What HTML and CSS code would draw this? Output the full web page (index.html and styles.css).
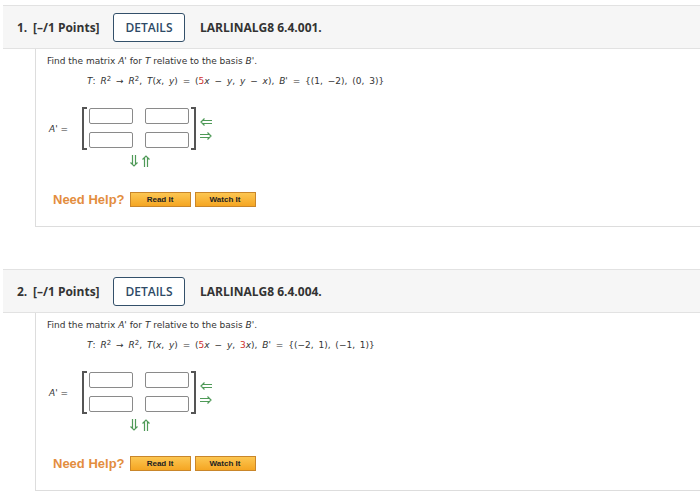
FILE: index.html
```html
<!DOCTYPE html>
<html>
<head>
<meta charset="utf-8">
<link rel="stylesheet" href="styles.css">
</head>
<body>
<div class="page">
  <section class="question q1">
    <div class="qhead">
      <span class="qnum">1.</span>
      <span class="points">[–/1 Points]</span>
      <span class="details">DETAILS</span>
      <span class="code">LARLINALG8 6.4.001.</span>
    </div>
    <div class="qbody">
      <p class="prompt">Find the matrix <i>A'</i> for <i>T</i> relative to the basis <i>B'</i>.</p>
      <p class="formula"><i>T</i>: <i>R</i><sup>2</sup> → <i>R</i><sup>2</sup>, <i>T</i>(<i>x</i>, <i>y</i>) = (<span class="red">5</span><i>x</i> − <i>y</i>, <i>y</i> − <i>x</i>), <i>B'</i> = {(1, −2), (0, 3)}</p>
      <div class="matrix-row">
        <span class="label"><i>A'</i> =</span>
        <div class="matrix-wrap">
          <div class="matrix">
            <span class="cell"></span><span class="cell"></span>
            <span class="cell"></span><span class="cell"></span>
          </div>
          <div class="row-arrows">
            <svg class="arr" width="12" height="8" viewBox="0 0 12 8"><path d="M12 2.5H3M12 5.5H3M4.5 0.5L1 4L4.5 7.5" fill="none" stroke="#4f9a58" stroke-width="1.2"/></svg>
            <svg class="arr" width="12" height="8" viewBox="0 0 12 8"><path d="M0 2.5H9M0 5.5H9M7.5 0.5L11 4L7.5 7.5" fill="none" stroke="#4f9a58" stroke-width="1.2"/></svg>
          </div>
        </div>
      </div>
      <div class="col-arrows">
        <svg class="arr" width="8" height="12" viewBox="0 0 8 12"><path d="M2.5 0V9M5.5 0V9M0.5 7.5L4 11L7.5 7.5" fill="none" stroke="#4f9a58" stroke-width="1.2"/></svg>
        <svg class="arr" width="8" height="12" viewBox="0 0 8 12"><path d="M2.5 12V3M5.5 12V3M0.5 4.5L4 1L7.5 4.5" fill="none" stroke="#4f9a58" stroke-width="1.2"/></svg>
      </div>
      <div class="help">
        <span class="need">Need Help?</span>
        <span class="btn">Read It</span>
        <span class="btn">Watch It</span>
      </div>
    </div>
  </section>
  <section class="question q2">
    <div class="qhead">
      <span class="qnum">2.</span>
      <span class="points">[–/1 Points]</span>
      <span class="details">DETAILS</span>
      <span class="code">LARLINALG8 6.4.004.</span>
    </div>
    <div class="qbody">
      <p class="prompt">Find the matrix <i>A'</i> for <i>T</i> relative to the basis <i>B'</i>.</p>
      <p class="formula"><i>T</i>: <i>R</i><sup>2</sup> → <i>R</i><sup>2</sup>, <i>T</i>(<i>x</i>, <i>y</i>) = (<span class="red">5</span><i>x</i> − <i>y</i>, <span class="red">3</span><i>x</i>), <i>B'</i> = {(−2, 1), (−1, 1)}</p>
      <div class="matrix-row">
        <span class="label"><i>A'</i> =</span>
        <div class="matrix-wrap">
          <div class="matrix">
            <span class="cell"></span><span class="cell"></span>
            <span class="cell"></span><span class="cell"></span>
          </div>
          <div class="row-arrows">
            <svg class="arr" width="12" height="8" viewBox="0 0 12 8"><path d="M12 2.5H3M12 5.5H3M4.5 0.5L1 4L4.5 7.5" fill="none" stroke="#4f9a58" stroke-width="1.2"/></svg>
            <svg class="arr" width="12" height="8" viewBox="0 0 12 8"><path d="M0 2.5H9M0 5.5H9M7.5 0.5L11 4L7.5 7.5" fill="none" stroke="#4f9a58" stroke-width="1.2"/></svg>
          </div>
        </div>
      </div>
      <div class="col-arrows">
        <svg class="arr" width="8" height="12" viewBox="0 0 8 12"><path d="M2.5 0V9M5.5 0V9M0.5 7.5L4 11L7.5 7.5" fill="none" stroke="#4f9a58" stroke-width="1.2"/></svg>
        <svg class="arr" width="8" height="12" viewBox="0 0 8 12"><path d="M2.5 12V3M5.5 12V3M0.5 4.5L4 1L7.5 4.5" fill="none" stroke="#4f9a58" stroke-width="1.2"/></svg>
      </div>
      <div class="help">
        <span class="need">Need Help?</span>
        <span class="btn">Read It</span>
        <span class="btn">Watch It</span>
      </div>
    </div>
  </section>
</div>
</body>
</html>
```
FILE: styles.css
```css
html, body {
  margin: 0;
  padding: 0;
  background: #ffffff;
}
.page {
  padding-top: 5px;
}
.question + .question {
  margin-top: 42px;
}
.qhead {
  margin-left: 3px;
  height: 42px;
  background: #f6f6f6;
  border-top: 1px solid #e2e2e2;
  border-bottom: 1px solid #e2e2e2;
  display: flex;
  align-items: center;
  font-family: "Open Sans", sans-serif;
  font-size: 12px;
  font-weight: 700;
  color: #333333;
}
.qnum {
  margin-left: 14px;
  width: 16px;
}
.points {
  width: 80px;
}
.details {
  box-sizing: border-box;
  width: 72px;
  height: 29px;
  border: 1px solid #33506a;
  border-radius: 3px;
  background: #ffffff;
  color: #2e4a66;
  font-weight: 600;
  display: flex;
  align-items: center;
  justify-content: center;
  margin-right: 15px;
}
.qbody {
  margin-left: 35px;
  height: 177px;
  border-left: 1px solid #dddddd;
  border-bottom: 1px solid #dddddd;
  padding-left: 11px;
  font-family: "DejaVu Sans", sans-serif;
  font-size: 9px;
  color: #333333;
}
.prompt {
  margin: 0;
  padding-top: 6px;
  line-height: 12px;
}
.formula {
  margin: 8px 0 0 40px;
  line-height: 12px;
  word-spacing: 2px;
}
.formula sup {
  font-size: 7px;
  vertical-align: 3px;
  line-height: 0;
}
.red {
  color: #d0312d;
}
.matrix-row {
  display: flex;
  align-items: center;
  margin-top: 20px;
}
.label {
  width: 33px;
  margin-left: 2px;
}
.matrix-wrap {
  display: flex;
  align-items: center;
}
.matrix {
  display: grid;
  grid-template-columns: 44px 44px;
  column-gap: 12px;
  row-gap: 8px;
  padding: 1px 5px 2px;
  border-left: 2px solid #555555;
  border-right: 2px solid #555555;
  position: relative;
}
.matrix::before,
.matrix::after {
  content: "";
  position: absolute;
  top: 0;
  bottom: 0;
  width: 3px;
  border-top: 2px solid #555555;
  border-bottom: 2px solid #555555;
}
.matrix::before { left: 0; }
.matrix::after { right: 0; }
.cell {
  box-sizing: border-box;
  height: 16px;
  border: 1px solid #8a8a8a;
  border-radius: 2px;
  background: #ffffff;
}
.row-arrows {
  display: flex;
  flex-direction: column;
  margin-left: 4px;
  gap: 6px;
}
.arr {
  display: block;
}
.col-arrows {
  display: flex;
  gap: 4px;
  margin-left: 83px;
  margin-top: 5px;
}
.help {
  display: flex;
  align-items: center;
  margin-top: 25px;
  margin-left: 6px;
}
.need {
  font-family: "Liberation Sans", Arial, sans-serif;
  font-weight: 700;
  font-size: 13px;
  color: #e38d3e;
  margin-right: 5px;
}
.btn {
  box-sizing: border-box;
  width: 61px;
  height: 15px;
  margin-right: 4px;
  border: 1px solid #c9862a;
  background: linear-gradient(#fcc652, #f5a623);
  font-family: "Liberation Sans", Arial, sans-serif;
  font-weight: 700;
  font-size: 8px;
  color: #222222;
  display: flex;
  align-items: center;
  justify-content: center;
}
```
